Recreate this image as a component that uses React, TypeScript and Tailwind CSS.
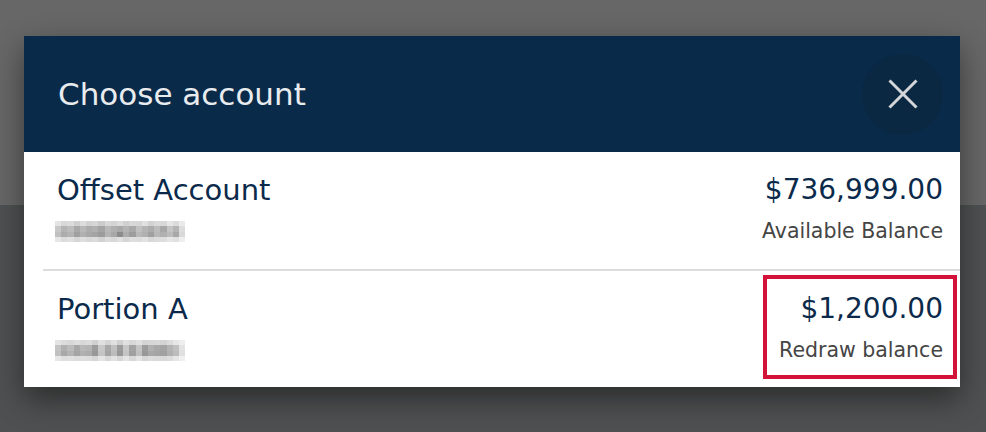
type Account = {
  name: string;
  amount: string;
  label: string;
  mask: number[][];
  highlight?: boolean;
};

// pixelated (redacted) account number, one grey shade per cell
const MASK_A = [
  [0xe4, 0xd8, 0xdc, 0xd0, 0xdc, 0xd2, 0xd6, 0xcc, 0xd8, 0xd4, 0xdc, 0xd0, 0xd8, 0xd6, 0xe0, 0xd2, 0xda, 0xd8, 0xe6, 0xdc, 0xea],
  [0xc8, 0xb4, 0xbc, 0xa8, 0xb8, 0xac, 0xb0, 0xa4, 0xb8, 0xb0, 0xa8, 0xb4, 0xa8, 0xc0, 0xb4, 0xac, 0xbc, 0xa8, 0xc4, 0xb4, 0xdc],
  [0xc0, 0xac, 0xb4, 0xa0, 0xb0, 0xa8, 0xa4, 0x9c, 0xb4, 0xa8, 0x8c, 0xac, 0x9c, 0xb8, 0xb0, 0xa0, 0xb8, 0xb0, 0xbc, 0xa8, 0xd8],
  [0xe6, 0xdc, 0xe0, 0xd6, 0xde, 0xd8, 0xdc, 0xd2, 0xdc, 0xd8, 0xe0, 0xd6, 0xde, 0xdc, 0xe2, 0xd8, 0xdc, 0xde, 0xe6, 0xe0, 0xee],
];

const MASK_B = [
  [0xe4, 0xdc, 0xd8, 0xde, 0xd8, 0xdc, 0xd0, 0xe0, 0xd4, 0xe0, 0xd0, 0xe0, 0xd8, 0xe0, 0xd4, 0xd6, 0xd8, 0xd4, 0xdc, 0xe6, 0xee],
  [0xc4, 0xb0, 0xbc, 0xa8, 0xb8, 0xb4, 0x9c, 0xc8, 0xa8, 0xc0, 0x9c, 0xc8, 0xa4, 0xc4, 0x9c, 0xb0, 0xa8, 0xa4, 0xb4, 0xc0, 0xe2],
  [0xc0, 0xa8, 0xb4, 0xa4, 0xb0, 0xac, 0x98, 0xc4, 0xa4, 0xbc, 0x98, 0xc4, 0xa0, 0xc0, 0x98, 0xa8, 0xa4, 0xa0, 0xb0, 0xbc, 0xe0],
  [0xe6, 0xde, 0xe0, 0xdc, 0xde, 0xdc, 0xd6, 0xe4, 0xd8, 0xe2, 0xd6, 0xe4, 0xd8, 0xe4, 0xd6, 0xdc, 0xda, 0xd8, 0xdc, 0xe6, 0xf0],
];

const ACCOUNTS: Account[] = [
  { name: "Offset Account", amount: "$736,999.00", label: "Available Balance", mask: MASK_A },
  { name: "Portion A", amount: "$1,200.00", label: "Redraw balance", mask: MASK_B, highlight: true },
];

function Redacted({ mask }: { mask: number[][] }) {
  const cw = 6.2;
  const ch = 5.25;
  return (
    <svg width={130} height={21} viewBox="0 0 130 21" aria-hidden="true" shapeRendering="crispEdges">
      {mask.map((row, r) =>
        row.map((v, c) => (
          <rect
            key={`${r}-${c}`}
            x={c * cw}
            y={r * ch}
            width={cw + 0.5}
            height={ch + 0.5}
            fill={`rgb(${v},${v},${v})`}
          />
        )),
      )}
    </svg>
  );
}

function CloseGlyph() {
  return (
    <svg width="30" height="30" viewBox="0 0 30 30" fill="none" stroke="#d4d6d9" strokeWidth="3" aria-hidden="true">
      <path d="M1.5 1.5l27 27" />
      <path d="M28.5 1.5l-27 27" />
    </svg>
  );
}

function AccountRow({ account }: { account: Account }) {
  return (
    <li
      className={
        account.highlight
          ? "flex h-[116px] items-start justify-between pl-[14px] pr-[17px]"
          : "flex h-[119px] items-start justify-between border-b-2 border-[#dcdcdc] pl-[14px] pr-[17px]"
      }
    >
      <div className="flex flex-col pt-[24px]">
        <span className="text-[29px] leading-[29px] text-[#0b2a4b]">{account.name}</span>
        <div className="mt-[16px] -ml-[2px]">
          <Redacted mask={account.mask} />
        </div>
      </div>
      {account.highlight ? (
        <div className="mt-[4px] -mr-[14px] flex h-[104px] w-[194px] flex-col items-end border-4 border-[#d3123a] pr-[10px] pt-[16px]">
          <span className="text-[28px] leading-[28px] text-[#0b2a4b]">{account.amount}</span>
          <span className="mt-[17px] text-[20.5px] leading-[20px] text-[#454545]">{account.label}</span>
        </div>
      ) : (
        <div className="flex flex-col items-end pt-[24px]">
          <span className="text-[28px] leading-[28px] text-[#0b2a4b]">{account.amount}</span>
          <span className="mt-[17px] text-[20.5px] leading-[20px] text-[#454545]">{account.label}</span>
        </div>
      )}
    </li>
  );
}

export default function App() {
  return (
    <div
      className="relative h-[432px] w-[986px] overflow-hidden"
      style={{ fontFamily: "'DejaVu Sans', 'Open Sans', sans-serif" }}
    >
      <div className="h-[205px] bg-[#676767]" />
      <div className="h-[227px] bg-[#4f5051]" />

      <div className="absolute left-[24px] top-[36px] w-[936px] bg-white shadow-[0_12px_28px_rgba(0,0,0,0.45)]">
        <header className="flex h-[116px] items-center justify-between bg-[#0a2a4a] pl-[34px] pr-[17px]">
          <h2 className="text-[31px] font-normal leading-[31px] text-[#e9ecef]">Choose account</h2>
          <button
            type="button"
            aria-label="Close"
            className="flex h-[81px] w-[81px] items-center justify-center rounded-full bg-[#0b2843]"
          >
            <CloseGlyph />
          </button>
        </header>
        <ul className="ml-[19px] flex flex-col">
          {ACCOUNTS.map((account) => (
            <AccountRow key={account.name} account={account} />
          ))}
        </ul>
      </div>
    </div>
  );
}
